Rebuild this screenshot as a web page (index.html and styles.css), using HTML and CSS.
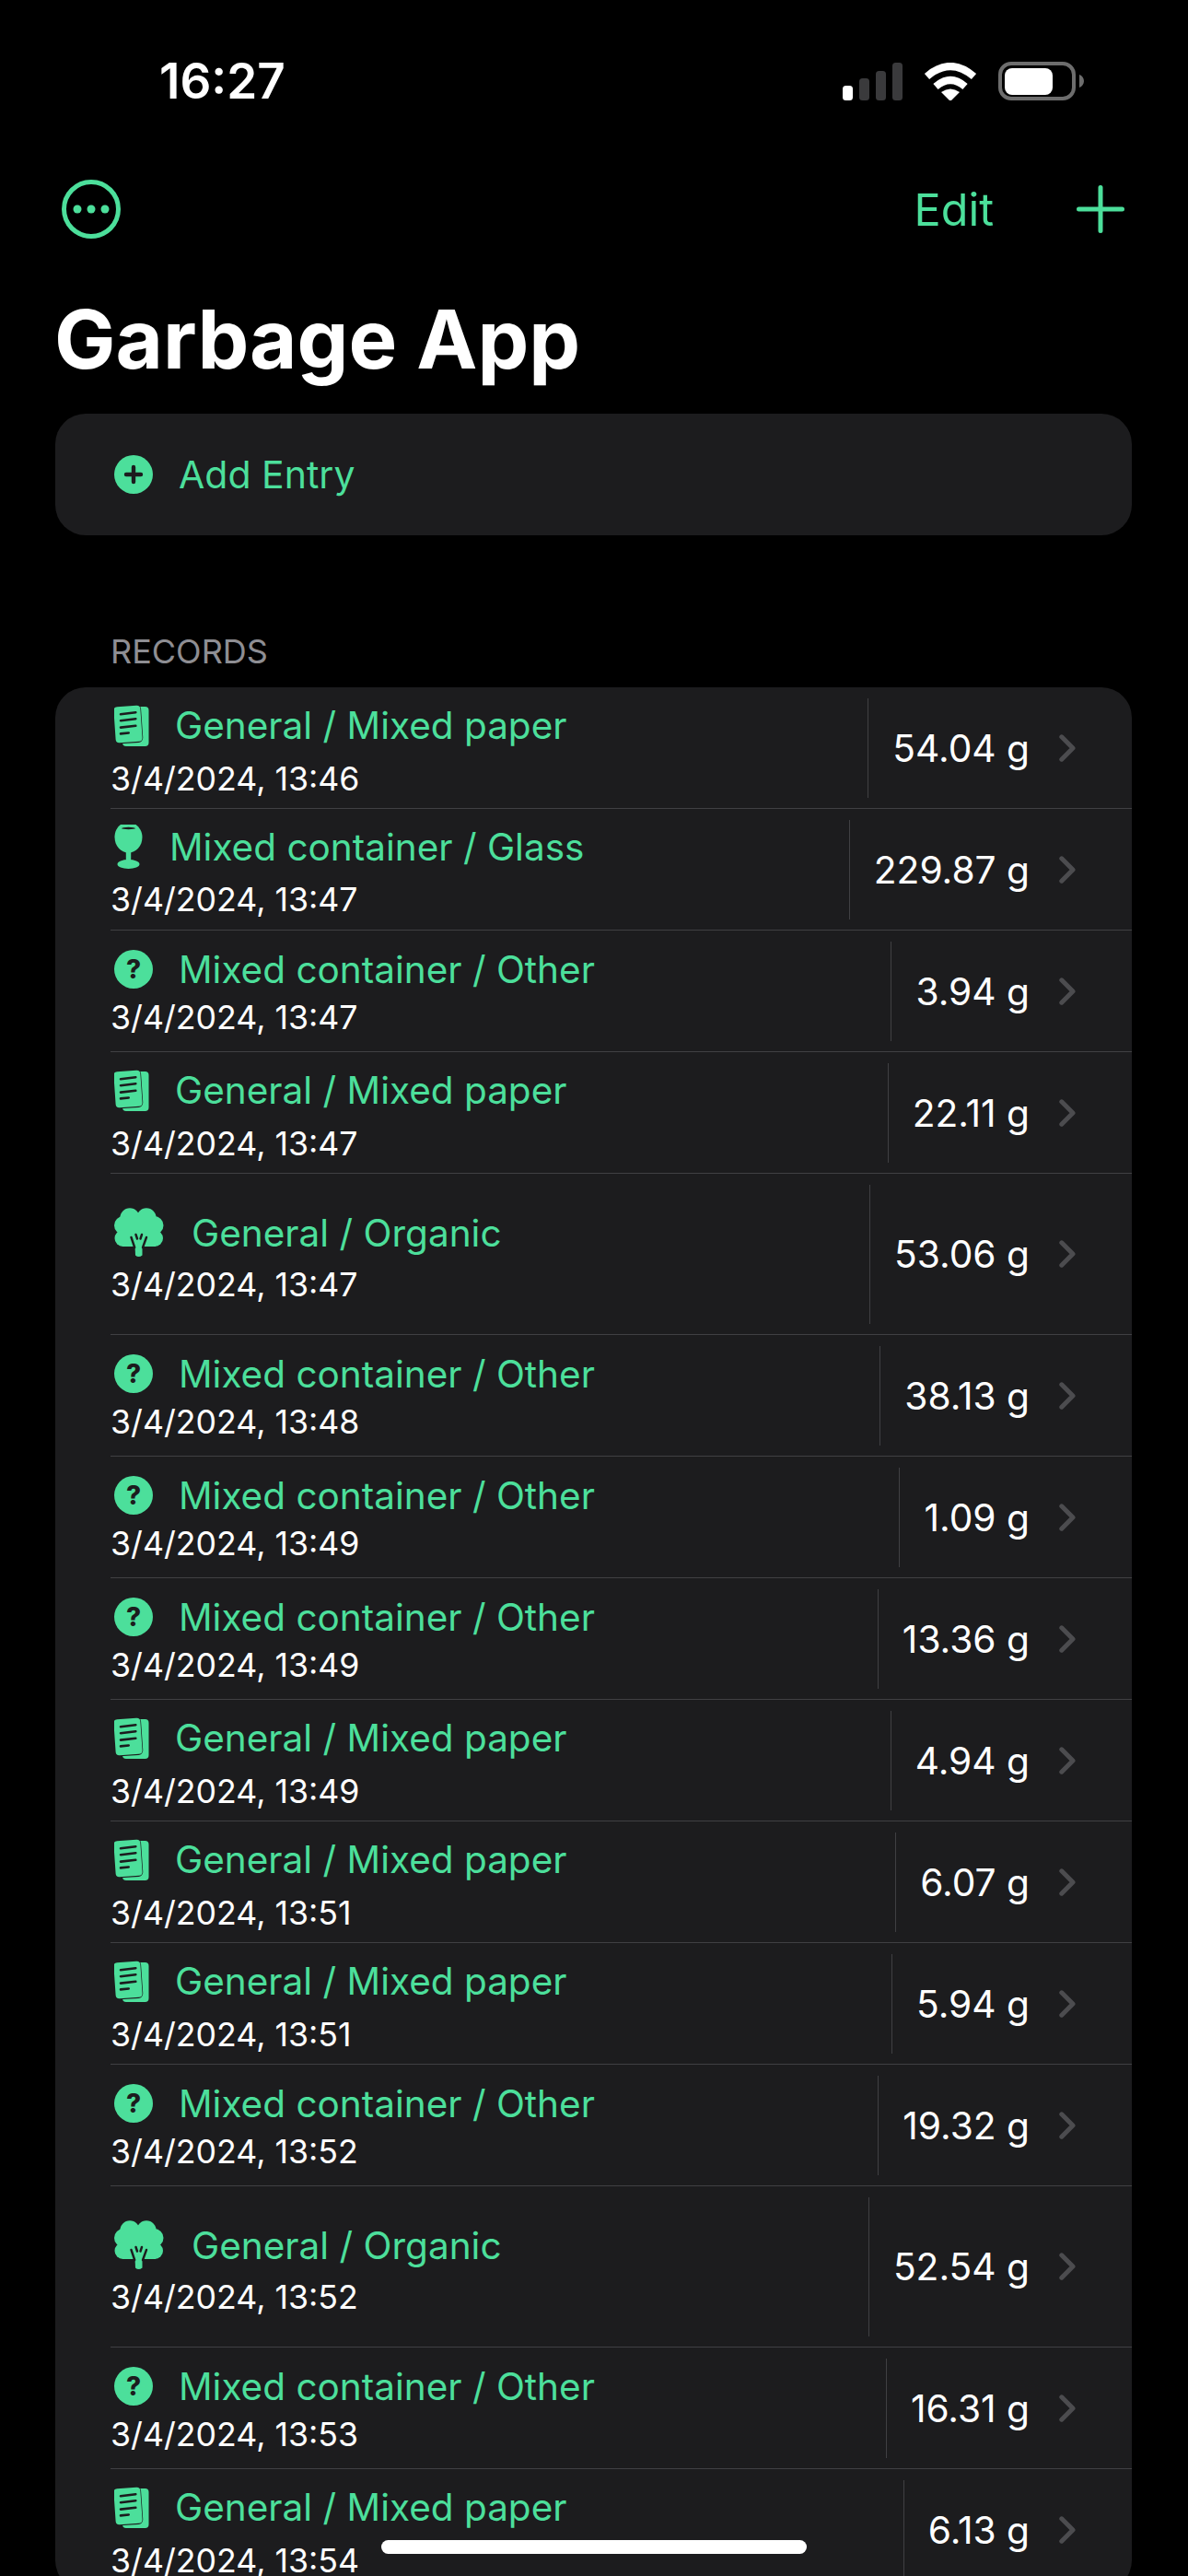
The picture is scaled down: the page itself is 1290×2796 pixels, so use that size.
FILE: index.html
```html
<!DOCTYPE html>
<html lang="en">
<head>
    <meta charset="UTF-8">
    <title>Garbage App</title>
    <link rel="stylesheet" href="styles.css">
</head>
<body>

    <svg class="defs" width="0" height="0">
        <symbol id="icon-paper" viewBox="0 0 38 46">
            <rect x="9" y="3" width="28.5" height="43" rx="4" fill="#4cdf9b"/>
            <rect x="1" y="2.5" width="28" height="39" rx="4" transform="rotate(-4 15 22)" fill="#4cdf9b" stroke="#1c1c1e" stroke-width="2.4"/>
            <rect x="0.5" y="2.5" width="29" height="39" rx="4" transform="rotate(-4 15 22)" fill="#4cdf9b"/>
            <g stroke="#1c1c1e" stroke-width="2.6" stroke-linecap="round">
                <path d="M7 11.3 23.3 9.2"/>
                <path d="M7 18.2 23.3 16.2"/>
                <path d="M7 25.6 23.3 23.8"/>
                <path d="M7 32.4 15.7 31.5"/>
            </g>
        </symbol>
        <symbol id="icon-glass" viewBox="0 0 31 48">
            <path d="M7 0H23.5C27.5 3 30.5 8 30.5 13.5C30.5 23.5 23.5 30.5 15.5 30.5C7.5 30.5 0.5 23.5 0.5 13.5C0.5 8 3 3 7 0Z" fill="#4cdf9b"/>
            <ellipse cx="15.5" cy="4" rx="7.5" ry="1.2" fill="#1c1c1e"/>
            <rect x="12.8" y="28" width="5.4" height="13" fill="#4cdf9b"/>
            <ellipse cx="15.5" cy="43" rx="12" ry="5" fill="#4cdf9b"/>
        </symbol>
        <symbol id="icon-tree" viewBox="0 0 54 54">
            <g fill="#4cdf9b">
                <circle cx="17" cy="11" r="10.7"/>
                <circle cx="35" cy="11" r="10.7"/>
                <circle cx="10" cy="19" r="10"/>
                <circle cx="43.5" cy="19" r="10"/>
                <circle cx="9.5" cy="33" r="9"/>
                <circle cx="44" cy="33" r="9"/>
                <rect x="9" y="10" width="36" height="32"/>
                <path d="M22.5 40H30.5V51.5Q26.5 54.5 23 51.5Z"/>
            </g>
            <g stroke="#1c1c1e" stroke-width="2.4" stroke-linecap="round" fill="none">
                <path d="M18.5 32 22.2 43"/>
                <path d="M23.5 29 25 33.5"/>
                <path d="M30 29 28.5 33.5"/>
                <path d="M35 32 31 43"/>
            </g>
        </symbol>
        <symbol id="icon-chevron" viewBox="0 0 18 30">
            <path d="M2.8 2.8 15 15 2.8 27.2" fill="none" stroke="#4c4c4f" stroke-width="5" stroke-linecap="round" stroke-linejoin="round"/>
        </symbol>
    </svg>

    <div class="status-bar">
        <span class="clock">16:27</span>
        <div class="status-icons">
            <svg width="65" height="41" viewBox="0 0 65 41">
                <rect x="0" y="25" width="11" height="16" rx="3.5" fill="#fff"/>
                <rect x="18" y="17" width="11" height="24" rx="3.5" fill="#3a3a3c"/>
                <rect x="36" y="9" width="11" height="32" rx="3.5" fill="#3a3a3c"/>
                <rect x="54" y="0" width="11" height="41" rx="3.5" fill="#3a3a3c"/>
            </svg>
            <svg width="58" height="41" viewBox="0 0 58 41">
                <path d="M3.5 15Q29 -7 54.5 15" fill="none" stroke="#fff" stroke-width="8"/>
                <path d="M13 26Q29 12 45 26" fill="none" stroke="#fff" stroke-width="8"/>
                <path d="M19 32Q29 25 39 32L30 41H28Z" fill="#fff"/>
            </svg>
            <svg width="93" height="42" viewBox="0 0 93 42">
                <rect x="2" y="2" width="80" height="38" rx="12" fill="none" stroke="#6d6d6d" stroke-width="4"/>
                <rect x="7" y="7" width="52" height="29" rx="8" fill="#fff"/>
                <path d="M88 14C91 15 93 18 93 21C93 24 91 27 88 28Z" fill="#6d6d6d"/>
            </svg>
        </div>
    </div>

    <div class="nav-bar">
        <svg class="more-icon" width="64" height="64" viewBox="0 0 64 64">
            <circle cx="32" cy="32" r="29.5" fill="none" stroke="#4cdf9b" stroke-width="5"/>
            <circle cx="17" cy="32" r="4.5" fill="#4cdf9b"/>
            <circle cx="32" cy="32" r="4.5" fill="#4cdf9b"/>
            <circle cx="47" cy="32" r="4.5" fill="#4cdf9b"/>
        </svg>
        <div class="nav-actions">
            <span class="edit-link">Edit</span>
            <svg width="52" height="52" viewBox="0 0 52 52">
                <path d="M2.5 26H49.5M26 2.5V49.5" fill="none" stroke="#4cdf9b" stroke-width="5" stroke-linecap="round"/>
            </svg>
        </div>
    </div>

    <h1 class="page-title">Garbage App</h1>

    <div class="card add-card">
        <svg class="add-icon" width="42" height="42" viewBox="0 0 42 42">
            <circle cx="21" cy="21" r="21" fill="#4cdf9b"/>
            <path d="M21 13V29M13 21H29" fill="none" stroke="#1c1c1e" stroke-width="4.4" stroke-linecap="round"/>
        </svg>
        <span>Add Entry</span>
    </div>

    <div class="section-label">RECORDS</div>

    <div class="card records">

        <div class="row paper">
            <div class="info">
                <div class="title"><svg class="icon"><use href="#icon-paper"/></svg>General / Mixed paper</div>
                <div class="date">3/4/2024, 13:46</div>
            </div>
            <div class="weight">54.04 g</div>
            <svg class="chevron"><use href="#icon-chevron"/></svg>
        </div>

        <div class="row glass">
            <div class="info">
                <div class="title"><svg class="icon"><use href="#icon-glass"/></svg>Mixed container / Glass</div>
                <div class="date">3/4/2024, 13:47</div>
            </div>
            <div class="weight">229.87 g</div>
            <svg class="chevron"><use href="#icon-chevron"/></svg>
        </div>

        <div class="row other">
            <div class="info">
                <div class="title"><span class="icon">?</span>Mixed container / Other</div>
                <div class="date">3/4/2024, 13:47</div>
            </div>
            <div class="weight">3.94 g</div>
            <svg class="chevron"><use href="#icon-chevron"/></svg>
        </div>

        <div class="row paper">
            <div class="info">
                <div class="title"><svg class="icon"><use href="#icon-paper"/></svg>General / Mixed paper</div>
                <div class="date">3/4/2024, 13:47</div>
            </div>
            <div class="weight">22.11 g</div>
            <svg class="chevron"><use href="#icon-chevron"/></svg>
        </div>

        <div class="row organic">
            <div class="info">
                <div class="title"><svg class="icon"><use href="#icon-tree"/></svg>General / Organic</div>
                <div class="date">3/4/2024, 13:47</div>
            </div>
            <div class="weight">53.06 g</div>
            <svg class="chevron"><use href="#icon-chevron"/></svg>
        </div>

        <div class="row other">
            <div class="info">
                <div class="title"><span class="icon">?</span>Mixed container / Other</div>
                <div class="date">3/4/2024, 13:48</div>
            </div>
            <div class="weight">38.13 g</div>
            <svg class="chevron"><use href="#icon-chevron"/></svg>
        </div>

        <div class="row other">
            <div class="info">
                <div class="title"><span class="icon">?</span>Mixed container / Other</div>
                <div class="date">3/4/2024, 13:49</div>
            </div>
            <div class="weight">1.09 g</div>
            <svg class="chevron"><use href="#icon-chevron"/></svg>
        </div>

        <div class="row other">
            <div class="info">
                <div class="title"><span class="icon">?</span>Mixed container / Other</div>
                <div class="date">3/4/2024, 13:49</div>
            </div>
            <div class="weight">13.36 g</div>
            <svg class="chevron"><use href="#icon-chevron"/></svg>
        </div>

        <div class="row paper">
            <div class="info">
                <div class="title"><svg class="icon"><use href="#icon-paper"/></svg>General / Mixed paper</div>
                <div class="date">3/4/2024, 13:49</div>
            </div>
            <div class="weight">4.94 g</div>
            <svg class="chevron"><use href="#icon-chevron"/></svg>
        </div>

        <div class="row paper">
            <div class="info">
                <div class="title"><svg class="icon"><use href="#icon-paper"/></svg>General / Mixed paper</div>
                <div class="date">3/4/2024, 13:51</div>
            </div>
            <div class="weight">6.07 g</div>
            <svg class="chevron"><use href="#icon-chevron"/></svg>
        </div>

        <div class="row paper">
            <div class="info">
                <div class="title"><svg class="icon"><use href="#icon-paper"/></svg>General / Mixed paper</div>
                <div class="date">3/4/2024, 13:51</div>
            </div>
            <div class="weight">5.94 g</div>
            <svg class="chevron"><use href="#icon-chevron"/></svg>
        </div>

        <div class="row other">
            <div class="info">
                <div class="title"><span class="icon">?</span>Mixed container / Other</div>
                <div class="date">3/4/2024, 13:52</div>
            </div>
            <div class="weight">19.32 g</div>
            <svg class="chevron"><use href="#icon-chevron"/></svg>
        </div>

        <div class="row organic">
            <div class="info">
                <div class="title"><svg class="icon"><use href="#icon-tree"/></svg>General / Organic</div>
                <div class="date">3/4/2024, 13:52</div>
            </div>
            <div class="weight">52.54 g</div>
            <svg class="chevron"><use href="#icon-chevron"/></svg>
        </div>

        <div class="row other">
            <div class="info">
                <div class="title"><span class="icon">?</span>Mixed container / Other</div>
                <div class="date">3/4/2024, 13:53</div>
            </div>
            <div class="weight">16.31 g</div>
            <svg class="chevron"><use href="#icon-chevron"/></svg>
        </div>

        <div class="row paper">
            <div class="info">
                <div class="title"><svg class="icon"><use href="#icon-paper"/></svg>General / Mixed paper</div>
                <div class="date">3/4/2024, 13:54</div>
            </div>
            <div class="weight">6.13 g</div>
            <svg class="chevron"><use href="#icon-chevron"/></svg>
        </div>

    </div>

    <div class="home-indicator"></div>

</body>
</html>
```

FILE: styles.css
```css
* {
    margin: 0;
    padding: 0;
    box-sizing: border-box;
}
html, body {
    height: 2796px;
    overflow: hidden;
}
body {
    position: relative;
    background-color: black;
    font-family: Inter, "Noto Sans", sans-serif;
    color: white;
}
.defs {
    position: absolute;
}

.status-bar {
    display: flex;
    justify-content: space-between;
    align-items: center;
    height: 176px;
    padding: 0 113px 0 173px;
}
.clock {
    font-size: 53px;
    font-weight: 600;
}
.status-icons {
    display: flex;
    align-items: center;
    gap: 23px;
}

.nav-bar {
    display: flex;
    justify-content: space-between;
    align-items: center;
    height: 102px;
    padding: 0 69px 0 67px;
}
.nav-actions {
    display: flex;
    align-items: center;
    gap: 90px;
}
.edit-link {
    font-size: 48.5px;
    color: #4cdf9b;
}

.page-title {
    height: 171px;
    padding: 35px 0 0 59px;
    font-size: 88.6px;
    line-height: 110px;
    font-weight: 700;
}

.card {
    width: 1169px;
    margin-left: 60px;
    background: #1c1c1e;
    border-radius: 33px;
}
.add-card {
    display: flex;
    align-items: center;
    gap: 28px;
    height: 132px;
    padding-left: 64px;
    font-size: 41px;
    color: #4cdf9b;
}

.section-label {
    height: 165px;
    padding: 105px 0 0 120px;
    font-size: 36px;
    line-height: 42px;
    color: #8e8e93;
}

.records {
    padding-left: 60px;
}
.row {
    display: flex;
    align-items: center;
    height: 132px;
    padding-right: 61px;
    border-bottom: 1px solid #404043;
}
.organic {
    height: 175px;
}
.info {
    flex-grow: 1;
    align-self: flex-start;
}
.title {
    display: flex;
    align-items: center;
    height: 58px;
    font-size: 40.5px;
    color: #4cdf9b;
}
.date {
    font-size: 35.7px;
    line-height: 40px;
}
.paper .info {
    padding-top: 12px;
}
.paper .title {
    gap: 28px;
    margin-bottom: 9px;
}
.glass .info {
    padding-top: 12px;
}
.glass .title {
    gap: 29px;
    margin-bottom: 8px;
}
.other .info {
    padding-top: 13px;
}
.other .title {
    gap: 28px;
    margin-bottom: 3px;
}
.organic .info {
    padding-top: 35px;
}
.organic .title {
    gap: 30px;
    margin-bottom: 7px;
}
.icon {
    flex-shrink: 0;
    margin-left: 4px;
}
.paper .icon {
    width: 38px;
    height: 46px;
}
.glass .icon {
    width: 31px;
    height: 48px;
}
.other .icon {
    display: flex;
    justify-content: center;
    align-items: center;
    width: 42px;
    height: 42px;
    border-radius: 50%;
    background: #4cdf9b;
    font-size: 28px;
    font-weight: 800;
    color: #1c1c1e;
}
.organic .icon {
    width: 54px;
    height: 54px;
}
.weight {
    align-self: stretch;
    display: flex;
    align-items: center;
    margin: 12px 32px 11px 0;
    padding-left: 26px;
    border-left: 1px solid #404043;
    font-size: 40.7px;
}
.chevron {
    flex-shrink: 0;
    width: 18px;
    height: 30px;
}

.home-indicator {
    position: absolute;
    left: 414px;
    top: 2757px;
    width: 462px;
    height: 15px;
    background: white;
    border-radius: 8px;
}
```
